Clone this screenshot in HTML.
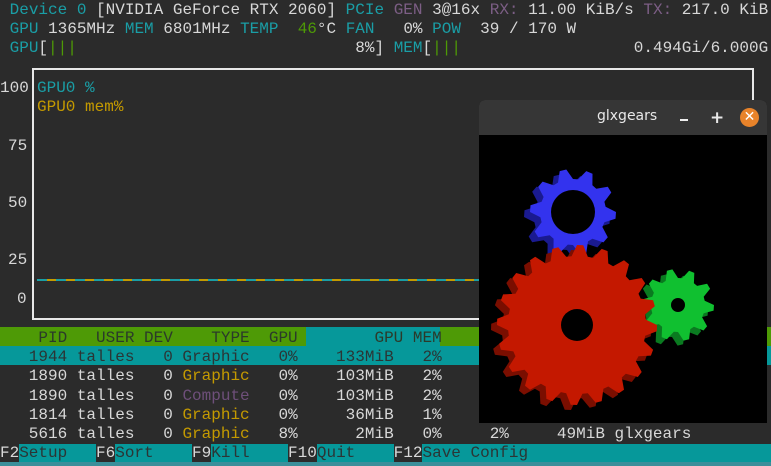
<!DOCTYPE html>
<html><head><meta charset="utf-8"><style>
body{margin:0;width:771px;height:466px;overflow:hidden;background:#2b2b2b;font-family:"Liberation Mono","DejaVu Sans Mono",monospace;font-size:16px;color:#d8d8d8;position:relative}
.l{position:absolute;left:0;height:19.2px;line-height:19.2px;white-space:pre;width:771px}
.c{color:#1a9ea6}.p{color:#7c5e85}.g{color:#4e9a06}.y{color:#c49a00}.m{color:#6e4f7a}
.lab{position:absolute;white-space:pre;line-height:19px}
</style></head><body>
<div class="l" style="top:1px"> <span class="c">Device 0</span> [NVIDIA GeForce RTX 2060] <span class="c">PCIe</span> <span class="p">GEN</span> 3@16x <span class="p">RX:</span> 11.00 KiB/s <span class="p">TX:</span> 217.0 KiB</div>
<div class="l" style="top:20.2px"> <span class="c">GPU</span> 1365MHz <span class="c">MEM</span> 6801MHz <span class="c">TEMP</span>  <span class="g">46</span>°C <span class="c">FAN</span>   0% <span class="c">POW</span>  39 / 170 W</div>
<div class="l" style="top:39.4px"> <span class="c">GPU</span>[<span class="g">|||</span>                             8%] <span class="c">MEM</span>[<span class="g">|||</span>                  0.494Gi/6.000G</div>

<div style="position:absolute;left:32px;top:68px;width:718px;height:248px;border:2px solid #e8e8e8"></div>
<div class="lab" style="left:0;top:79px">100</div>
<div class="lab" style="left:8px;top:137px">75</div>
<div class="lab" style="left:8px;top:194px">50</div>
<div class="lab" style="left:8px;top:251px">25</div>
<div class="lab" style="left:17px;top:290px">0</div>
<div class="lab c" style="left:37px;top:79px">GPU0 %</div>
<div class="lab y" style="left:37px;top:98px">GPU0 mem%</div>
<div style="position:absolute;left:37px;top:279px;width:445px;height:2px;background:repeating-linear-gradient(90deg,#1a9ea6 0 10px,#c49a00 10px 19px)"></div>

<div style="position:absolute;left:0;top:327px;width:306px;height:19.2px;background:#4e9a06"></div>
<div style="position:absolute;left:306px;top:327px;width:134px;height:19.2px;background:#06989a"></div>
<div style="position:absolute;left:440px;top:327px;width:331px;height:19.2px;background:#4e9a06"></div>
<div style="position:absolute;left:0;top:346.2px;width:771px;height:19.2px;background:#06989a"></div>
<div class="l" style="top:329px;color:#2b3a2a">    PID   USER DEV    TYPE  GPU        GPU MEM</div>
<div class="l" style="top:348.2px;color:#2b3535">   1944 talles   0 Graphic   0%    133MiB   2%</div>
<div class="l" style="top:367.4px">   1890 talles   0 <span class="y">Graphic</span>   0%    103MiB   2%</div>
<div class="l" style="top:386.6px">   1890 talles   0 <span class="m">Compute</span>   0%    103MiB   2%</div>
<div class="l" style="top:405.8px">   1814 talles   0 <span class="y">Graphic</span>   0%     36MiB   1%</div>
<div class="l" style="top:425px">   5616 talles   0 <span class="y">Graphic</span>   8%      2MiB   0%     2%     49MiB glxgears</div>
<div class="l" style="top:443.6px"><span>F2</span><span style="background:#06989a;color:#2b3535">Setup   </span><span>F6</span><span style="background:#06989a;color:#2b3535">Sort    </span><span>F9</span><span style="background:#06989a;color:#2b3535">Kill    </span><span>F10</span><span style="background:#06989a;color:#2b3535">Quit    </span><span>F12</span><span style="background:#06989a;color:#2b3535">Save Config                          </span></div>
<div style="position:absolute;left:0;top:462px;width:771px;height:4px;background:#3b8f9a"></div>

<div style="position:absolute;left:479px;top:100px;width:288px;height:323px;background:#000;border-radius:6px 6px 0 0;overflow:hidden">
 <div style="height:35px;background:#363636;position:relative;font-family:'DejaVu Sans','Liberation Sans',sans-serif;font-size:14px;color:#e8e8e8">
  <div style="position:absolute;left:118px;top:8px">glxgears</div>
  <div style="position:absolute;left:201px;top:19px;width:8px;height:2px;background:#eee"></div>
  <div style="position:absolute;left:231px;top:8px;font-size:17px;font-weight:bold">+</div>
  <div style="position:absolute;left:261px;top:8px;width:19px;height:19px;border-radius:50%;background:#e8832a;color:#fff;font-size:14px;text-align:center;line-height:19px;font-weight:bold">✕</div>
 </div>
 <svg id="s" width="288" height="288" style="position:absolute;left:0;top:35px"></svg>
</div>
<script>
function gear(cx,cy,r,t,n,dark,col,hole){
 let pts=[];for(let i=0;i<n*4;i++){let a=i/(n*4)*Math.PI*2;let k=i%4;let rr=(k==0||k==1)?r:r-t;pts.push((cx+rr*Math.cos(a)).toFixed(1)+','+(cy+rr*Math.sin(a)).toFixed(1));}
 let s='';
 s+='<polygon points="'+pts.join(' ')+'" fill="'+dark+'" transform="translate(-6,5)"/>';
 s+='<polygon points="'+pts.join(' ')+'" fill="'+col+'"/>';
 s+='<circle cx="'+cx+'" cy="'+cy+'" r="'+hole+'" fill="#000"/>';
 return s;}
document.getElementById('s').innerHTML=
 gear(94,77,43,10,10,'#1a1a90','#3333ee',22)+
 gear(199,170,36,9,10,'#0a7a20','#10c030',7)+
 gear(98,190,80,11,20,'#7a0e00','#c41800',16);
</script>
</body></html>
